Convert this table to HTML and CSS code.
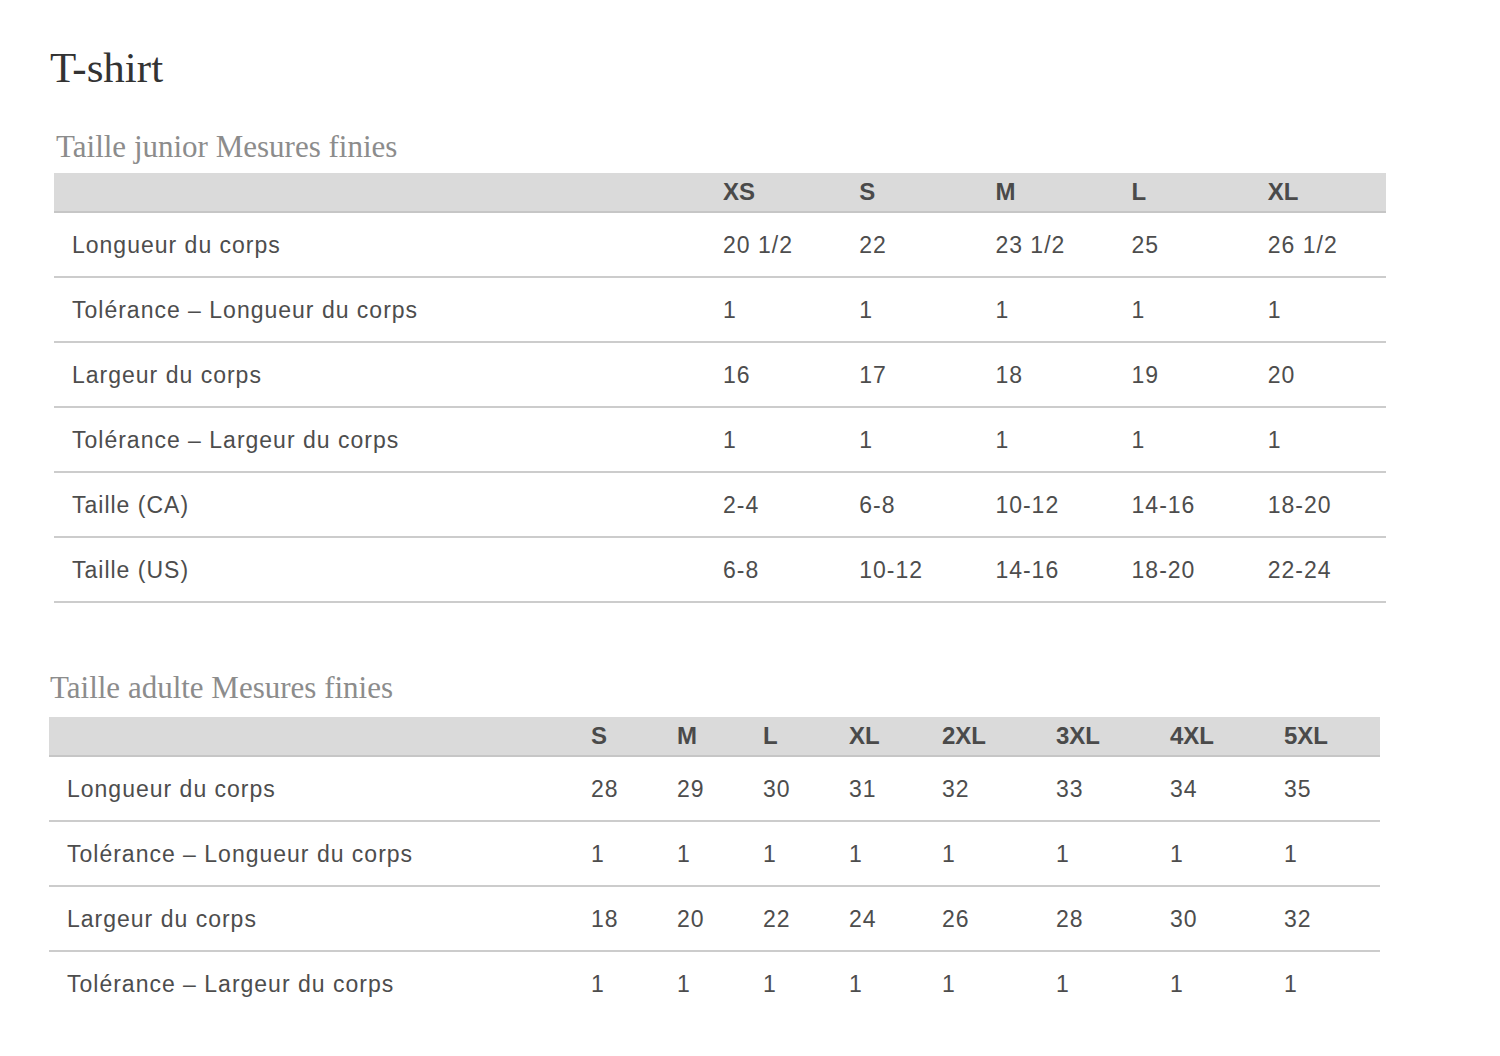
FILE: index.html
```
<!DOCTYPE html>
<html lang="fr">
<head>
<meta charset="utf-8">
<title>T-shirt</title>
<link rel="stylesheet" href="styles.css">
</head>
<body>
<main class="page">
  <h1 class="title">T-shirt</h1>

  <section class="section junior">
    <h2 class="subtitle">Taille junior Mesures finies</h2>
    <table class="size-table">
      <colgroup>
        <col class="col-label-junior">
        <col><col><col><col><col>
      </colgroup>
      <thead>
        <tr><th></th><th>XS</th><th>S</th><th>M</th><th>L</th><th>XL</th></tr>
      </thead>
      <tbody>
        <tr><td>Longueur du corps</td><td>20 1/2</td><td>22</td><td>23 1/2</td><td>25</td><td>26 1/2</td></tr>
        <tr><td>Tolérance – Longueur du corps</td><td>1</td><td>1</td><td>1</td><td>1</td><td>1</td></tr>
        <tr><td>Largeur du corps</td><td>16</td><td>17</td><td>18</td><td>19</td><td>20</td></tr>
        <tr><td>Tolérance – Largeur du corps</td><td>1</td><td>1</td><td>1</td><td>1</td><td>1</td></tr>
        <tr><td>Taille (CA)</td><td>2-4</td><td>6-8</td><td>10-12</td><td>14-16</td><td>18-20</td></tr>
        <tr><td>Taille (US)</td><td>6-8</td><td>10-12</td><td>14-16</td><td>18-20</td><td>22-24</td></tr>
      </tbody>
    </table>
  </section>

  <section class="section adult">
    <h2 class="subtitle">Taille adulte Mesures finies</h2>
    <table class="size-table adult-table">
      <colgroup>
        <col class="col-label-adult">
        <col class="w86"><col class="w86"><col class="w86"><col class="w93">
        <col class="w114"><col class="w114"><col class="w114"><col class="w114">
      </colgroup>
      <thead>
        <tr><th></th><th>S</th><th>M</th><th>L</th><th>XL</th><th>2XL</th><th>3XL</th><th>4XL</th><th>5XL</th></tr>
      </thead>
      <tbody>
        <tr><td>Longueur du corps</td><td>28</td><td>29</td><td>30</td><td>31</td><td>32</td><td>33</td><td>34</td><td>35</td></tr>
        <tr><td>Tolérance – Longueur du corps</td><td>1</td><td>1</td><td>1</td><td>1</td><td>1</td><td>1</td><td>1</td><td>1</td></tr>
        <tr><td>Largeur du corps</td><td>18</td><td>20</td><td>22</td><td>24</td><td>26</td><td>28</td><td>30</td><td>32</td></tr>
        <tr class="last"><td>Tolérance – Largeur du corps</td><td>1</td><td>1</td><td>1</td><td>1</td><td>1</td><td>1</td><td>1</td><td>1</td></tr>
      </tbody>
    </table>
  </section>
</main>
</body>
</html>
```

FILE: styles.css
```
html, body {
  margin: 0;
  padding: 0;
  background: #ffffff;
}

.page {
  padding: 47px 0 0 49px;
  width: 1332px;
}

.title {
  margin: 0;
  font-family: "Liberation Serif", "Times New Roman", serif;
  font-weight: normal;
  font-size: 43px;
  line-height: 42px;
  color: #333333;
  padding-left: 1px;
}

.subtitle {
  margin: 0;
  font-family: "Liberation Serif", "Times New Roman", serif;
  font-weight: normal;
  font-size: 31px;
  line-height: 31px;
  color: #8c8c8c;
}

.section.junior {
  margin-top: 42px;
  margin-left: 5px;
}

.section.junior .subtitle {
  margin-left: 2px;
  margin-bottom: 11px;
}

.section.adult {
  margin-top: 69px;
}

.section.adult .subtitle {
  margin-left: 1px;
  margin-bottom: 14px;
}

.size-table {
  width: 1332px;
  border-collapse: collapse;
  table-layout: fixed;
  font-family: "Liberation Sans", Arial, sans-serif;
}

.adult-table {
  width: 1331px;
}

.col-label-junior { width: 651px; }
.col-label-adult { width: 524px; }
.w86 { width: 86px; }
.w93 { width: 93px; }
.w114 { width: 114px; }

.size-table th {
  background: #dadada;
  height: 38px;
  padding: 0 0 0 18px;
  text-align: left;
  vertical-align: middle;
  font-size: 24px;
  font-weight: bold;
  color: #4a4a4a;
  border-bottom: 2px solid #c6c6c6;
  white-space: nowrap;
}

.size-table td {
  height: 61px;
  padding: 2px 0 0 18px;
  text-align: left;
  vertical-align: middle;
  font-size: 23px;
  letter-spacing: 1px;
  color: #4d4d4d;
  border-bottom: 2px solid #cccccc;
  white-space: nowrap;
}

.size-table tr.last td {
  border-bottom: none;
}
```
